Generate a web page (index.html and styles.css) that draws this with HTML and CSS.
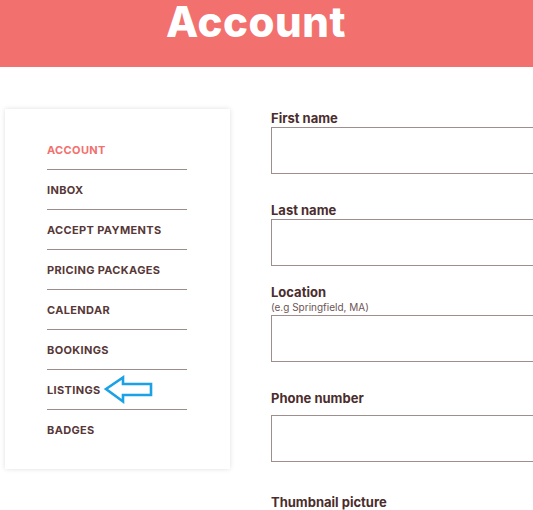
FILE: index.html
```html
<!DOCTYPE html>
<html lang="en">
<head>
<meta charset="utf-8">
<title>Account</title>
<link rel="stylesheet" href="styles.css">
</head>
<body>
<div class="page">
  <header class="hero">
    <h1 class="hero-title">Account</h1>
  </header>
  <main class="content">
    <aside class="side-card">
      <ul class="side-nav">
        <li class="side-item active">ACCOUNT</li>
        <li class="side-item">INBOX</li>
        <li class="side-item">ACCEPT PAYMENTS</li>
        <li class="side-item">PRICING PACKAGES</li>
        <li class="side-item">CALENDAR</li>
        <li class="side-item">BOOKINGS</li>
        <li class="side-item">LISTINGS
          <svg class="pointer" width="52" height="30" viewBox="0 0 52 30" aria-hidden="true">
            <polygon points="3,14 20,2.5 20,9 48,9 48,20 20,20 20,26.5" fill="none" stroke="#1ba1e6" stroke-width="2.6" stroke-linejoin="miter"/>
          </svg>
        </li>
        <li class="side-item last">BADGES</li>
      </ul>
    </aside>
    <form class="form">
      <div class="field f-first">
        <label class="label">First name</label>
        <div class="input"></div>
      </div>
      <div class="field f-last">
        <label class="label">Last name</label>
        <div class="input"></div>
      </div>
      <div class="field f-loc">
        <label class="label label-tight">Location</label>
        <div class="hint">(e.g Springfield, MA)</div>
        <div class="input"></div>
      </div>
      <div class="field f-phone">
        <label class="label label-gap">Phone number</label>
        <div class="input"></div>
      </div>
      <div class="field">
        <label class="label">Thumbnail picture</label>
      </div>
    </form>
  </main>
</div>
</body>
</html>
```

FILE: styles.css
```css
html, body {
  margin: 0;
  padding: 0;
  background: #ffffff;
}
.page {
  width: 533px;
  height: 510px;
  overflow: hidden;
  font-family: "Inter", "Open Sans", sans-serif;
}
.hero {
  background: #f2706e;
  height: 67px;
  display: flex;
  justify-content: center;
  padding-right: 21px;
  box-sizing: border-box;
}
.hero-title {
  margin: 1px 0 0 0;
  font-size: 42px;
  line-height: 1;
  font-weight: 800;
  color: #ffffff;
  letter-spacing: 0.5px;
}
.content {
  display: flex;
  align-items: flex-start;
  padding: 42px 0 0 5px;
  gap: 41px;
}
.side-card {
  flex: 0 0 225px;
  background: #fff;
  box-shadow: 0 0 5px rgba(0,0,0,0.13);
  padding: 21px 0 20px 42px;
  box-sizing: border-box;
}
.side-nav {
  list-style: none;
  margin: 0;
  padding: 0;
  width: 140px;
}
.side-item {
  height: 39px;
  display: flex;
  align-items: center;
  border-bottom: 1px solid #9c8c8b;
  font-size: 11px;
  font-weight: 700;
  color: #573838;
  letter-spacing: 0.35px;
  position: relative;
  white-space: nowrap;
}
.side-item.last {
  border-bottom: none;
}
.side-item.active {
  color: #f2706e;
}
.pointer {
  position: absolute;
  left: 56px;
  top: 5px;
}
.form {
  flex: 0 0 320px;
  padding-top: 1px;
}
.field {
  margin-bottom: 28px;
}
.f-first {
  margin-bottom: 28px;
}
.f-last {
  margin-bottom: 18px;
}
.f-loc {
  margin-bottom: 28px;
}
.f-phone {
  margin-bottom: 32px;
}
.label {
  display: block;
  font-size: 13px;
  line-height: 16px;
  font-weight: 700;
  color: #4b2d2d;
  margin-bottom: 1px;
}
.label-tight {
  margin-bottom: 0;
}
.label-gap {
  margin-bottom: 9px;
}
.hint {
  font-size: 10px;
  line-height: 12px;
  color: #6d5555;
  margin: 1px 0 2px 0;
}
.input {
  height: 47px;
  border: 1px solid #9e8f8d;
  box-sizing: border-box;
  width: 320px;
}
```
